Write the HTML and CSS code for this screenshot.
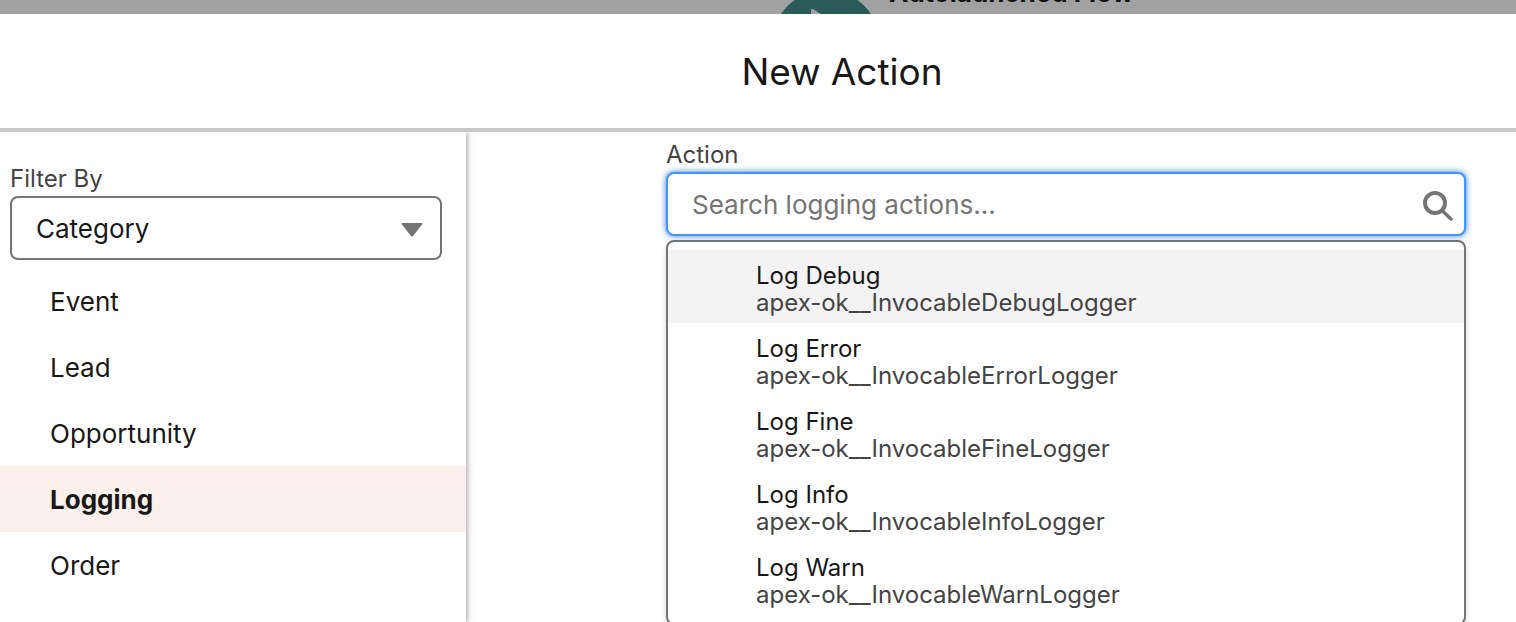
FILE: index.html
```
<!DOCTYPE html>
<html lang="en">
<head>
<meta charset="utf-8">
<title>New Action</title>
<link rel="stylesheet" href="styles.css">
</head>
<body>
<div class="canvas-strip">
  <div class="flow-node">
    <svg class="flow-icon" width="108" height="108" viewBox="0 0 108 108" aria-hidden="true"><circle cx="54" cy="54" r="54" fill="#2b5b59"/><path d="M42 19.500 74 41Q77 44 74 47L43 68Q39 70 39 66V21Q39 17.500 42 19.500Z" fill="#a0a0a0"/></svg>
    <span class="flow-title">Autolaunched Flow</span>
  </div>
</div>
<div class="modal" role="dialog" aria-labelledby="title">
  <header class="modal-header"><h1 id="title">New Action</h1></header>
  <div class="modal-body">
    <aside class="sidebar">
      <label class="field-label" for="filter">Filter By</label>
      <div class="select-wrap">
        <select id="filter" class="filter"><option>Category</option></select>
        <svg class="caret" width="22" height="14" viewBox="0 0 22 14" aria-hidden="true"><path d="M1 0H21Q22 0 21.500 1L12 13Q11 14 10 13L.5 1Q0 0 1 0Z" fill="#747474"/></svg>
      </div>
      <nav class="categories">
        <a href="#">Event</a>
        <a href="#">Lead</a>
        <a href="#">Opportunity</a>
        <a href="#" class="active" aria-current="true">Logging</a>
        <a href="#">Order</a>
      </nav>
    </aside>
    <main class="content">
      <label class="field-label" for="action">Action</label>
      <div class="search-wrap">
        <input id="action" class="search" type="text" placeholder="Search logging actions...">
        <svg class="search-icon" width="30" height="30" viewBox="0 0 30 30" fill="none" stroke="#747474" aria-hidden="true"><circle cx="12" cy="12" r="10" stroke-width="4"/><path d="M19 19.500 28 28" stroke-width="3.500" stroke-linecap="round"/></svg>
      </div>
      <ul class="options">
        <li class="option highlighted"><span class="name">Log Debug</span><span class="meta">apex-ok__InvocableDebugLogger</span></li>
        <li class="option"><span class="name">Log Error</span><span class="meta">apex-ok__InvocableErrorLogger</span></li>
        <li class="option"><span class="name">Log Fine</span><span class="meta">apex-ok__InvocableFineLogger</span></li>
        <li class="option"><span class="name">Log Info</span><span class="meta">apex-ok__InvocableInfoLogger</span></li>
        <li class="option"><span class="name">Log Warn</span><span class="meta">apex-ok__InvocableWarnLogger</span></li>
      </ul>
    </main>
  </div>
</div>
</body>
</html>
```
FILE: styles.css
```
* { box-sizing: border-box; }
body {
  margin: 0;
  height: 100vh;
  display: flex;
  flex-direction: column;
  overflow: hidden;
  font-family: Inter, "Liberation Sans", sans-serif;
  font-size: 26px;
  color: #181818;
  background: #fff;
}
.canvas-strip {
  flex: none;
  height: 14px;
  overflow: hidden;
  background: #a1a1a1;
}
.flow-node {
  display: flex;
  align-items: flex-start;
  gap: 9px;
  margin: -10px 0 0 772px;
}
.flow-icon { flex: none; }
.flow-title {
  margin-top: -12px;
  font-size: 26px;
  line-height: 30px;
  font-weight: 700;
  white-space: nowrap;
  color: #111;
}
.modal {
  flex: 1;
  min-height: 0;
  display: flex;
  flex-direction: column;
}
.modal-header {
  flex: none;
  padding: 33px 0 31px 168px;
  border-bottom: 4px solid #c9c9c9;
  text-align: center;
}
.modal-header h1 {
  margin: 0;
  font-size: 37px;
  line-height: 50px;
  font-weight: 400;
}
.modal-body {
  flex: 1;
  min-height: 0;
  display: flex;
}
.sidebar {
  flex: none;
  width: 466px;
  padding-top: 32px;
  box-shadow: 1px 0 6px rgba(0, 0, 0, 0.4);
  clip-path: inset(0 -8px 0 0);
}
.field-label {
  display: block;
  font-size: 24px;
  line-height: 30px;
  color: #444;
}
.sidebar .field-label { padding-left: 10px; }
.select-wrap {
  position: relative;
  margin: 2px 24px 8px 10px;
}
.filter {
  display: block;
  width: 100%;
  height: 64px;
  padding: 0 24px;
  appearance: none;
  border: 2px solid #747474;
  border-radius: 8px;
  background: #fff;
  font: inherit;
  color: #181818;
}
.caret {
  position: absolute;
  right: 19px;
  top: 27px;
  pointer-events: none;
}
.categories a {
  display: block;
  padding: 2px 0 0 50px;
  line-height: 64px;
  color: #181818;
  text-decoration: none;
}
.categories .active {
  background: #fcf0ec;
  font-weight: 700;
}
.content {
  flex: 1;
  min-width: 0;
  padding: 8px 50px 0 200px;
}
.search-wrap {
  position: relative;
  margin-top: 2px;
}
.search {
  display: block;
  width: 100%;
  height: 64px;
  padding: 0 70px 0 24px;
  border: 2px solid #4395fb;
  border-radius: 8px;
  outline: none;
  box-shadow: 0 0 6px #2f7be0;
  font: inherit;
}
.search::placeholder { color: #747474; opacity: 1; }
.search-icon {
  position: absolute;
  right: 13px;
  top: 19px;
}
.options {
  margin: 4px 0 0;
  padding: 8px 0;
  list-style: none;
  border: 2px solid #747474;
  border-radius: 8px;
  box-shadow: 0 4px 6px rgba(0, 0, 0, 0.16);
}
.option {
  padding: 12px 24px 7px 88px;
  font-size: 24px;
  line-height: 27px;
}
.option span { display: block; }
.highlighted { background: #f3f3f3; }
.meta { color: #444; }
```
